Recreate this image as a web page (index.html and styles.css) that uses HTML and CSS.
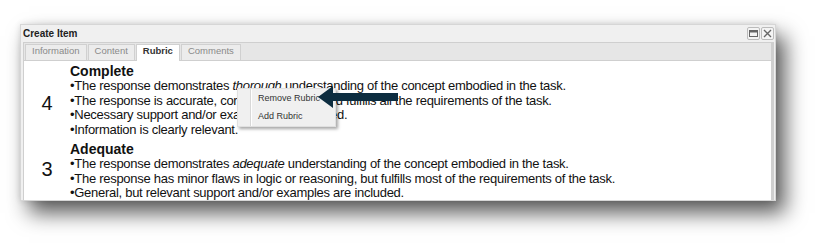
FILE: index.html
```html
<!DOCTYPE html>
<html>
<head>
<meta charset="utf-8">
<link rel="stylesheet" href="styles.css">
</head>
<body>
<div class="window">
  <div class="titlebar">
    <span class="title">Create Item</span>
    <div class="tools">
      <span class="tool"><svg width="9" height="9" viewBox="0 0 9 9"><rect x="0.5" y="1.5" width="8" height="6" fill="none" stroke="#666" stroke-width="1"/><rect x="0.5" y="1.5" width="8" height="2" fill="#666"/></svg></span>
      <span class="tool"><svg width="9" height="9" viewBox="0 0 9 9"><path d="M1 1 L8 8 M8 1 L1 8" stroke="#666" stroke-width="1.4"/></svg></span>
    </div>
  </div>
  <div class="panel">
    <div class="tabs">
      <span class="tab">Information</span>
      <span class="tab">Content</span>
      <span class="tab active">Rubric</span>
      <span class="tab">Comments</span>
    </div>
    <div class="content">
      <div class="rubric">
        <div class="score">4</div>
        <div class="desc">
          <div class="head">Complete</div>
          <div class="line">•The response demonstrates <i>thorough</i> understanding of the concept embodied in the task.</div>
          <div class="line">•The response is accurate, correct, complete, and fulfills all the requirements of the task.</div>
          <div class="line">•Necessary support and/or examples are included.</div>
          <div class="line">•Information is clearly relevant.</div>
        </div>
      </div>
      <div class="rubric">
        <div class="score top">3</div>
        <div class="desc">
          <div class="head">Adequate</div>
          <div class="line">•The response demonstrates <i>adequate</i> understanding of the concept embodied in the task.</div>
          <div class="line">•The response has minor flaws in logic or reasoning, but fulfills most of the requirements of the task.</div>
          <div class="line">•General, but relevant support and/or examples are included.</div>
        </div>
      </div>
    </div>
  </div>
</div>
<div class="menu">
  <div class="item">Remove Rubric</div>
  <div class="item">Add Rubric</div>
</div>
<svg class="arrow" width="80" height="22" viewBox="0 0 80 22"><polygon points="0,11 15,0 15,7 80,7 80,15 15,15 15,22" fill="#0d2d40"/></svg>
</body>
</html>
```
FILE: styles.css
```css
html, body { margin: 0; padding: 0; background: #fff; }
body { width: 823px; height: 247px; overflow: hidden; position: relative; font-family: "Liberation Sans", sans-serif; }
.window {
  margin: 24px 0 0 20px;
  width: 754px;
  height: 175px;
  background: #f0f0f0;
  border: 1px solid #d6d6d6;
  box-shadow: 9px 12px 20px rgba(0,0,0,0.65), 0 0 6px rgba(0,0,0,0.12);
  overflow: hidden;
}
.titlebar { height: 17px; display: flex; justify-content: space-between; align-items: center; padding: 0 1px 0 2px; }
.title { font: bold 10px "Liberation Sans", sans-serif; color: #222; }
.tools { display: flex; gap: 1px; }
.tool { width: 11px; height: 11px; border: 1px solid #bbb; border-radius: 2px; background: #f4f4f4; display: flex; align-items: center; justify-content: center; }
.panel { margin: 0 1px 0 2px; border: 1px solid #cfcfcf; border-right-width: 3px; background: #fff; height: 200px; }
.tabs { height: 17px; background: #e6e6e6; display: flex; gap: 1px; padding-left: 1px; border-bottom: 1px solid #cfcfcf; align-items: flex-end; }
.tab { height: 15px; line-height: 15px; padding: 0 6px; border: 1px solid #d0d0d0; border-bottom: none; background: #ececec; color: #8a8a8a; font: 9.5px "Liberation Sans", sans-serif; }
.tab.active { background: #fff; color: #333; font-weight: bold; height: 16px; margin-bottom: -1px; }
.content { padding-top: 3px; }
.rubric { display: flex; margin-bottom: 5px; }
.score { width: 46px; flex: none; display: flex; align-items: center; justify-content: center; font: 20px "Liberation Sans", sans-serif; color: #111; padding-top: 6px; }
.score.top { align-items: flex-start; padding-top: 16px; }
.desc { font-family: "Liberation Sans", sans-serif; color: #111; }
.head { font-weight: bold; font-size: 14px; line-height: 15px; }
.line { font-size: 13px; line-height: 14.5px; letter-spacing: -0.28px; }
.menu {
  position: absolute; left: 237px; top: 88px; width: 99px; height: 39px;
  background: #f0f0f0; box-shadow: 2px 2px 3px rgba(0,0,0,0.35); border: 1px solid #e0e0e0; box-sizing: border-box;
  padding-left: 20px; font: 9px "Liberation Sans", sans-serif; color: #333;
  background-image: linear-gradient(to right, transparent 12px, #d8d8d8 12px, #d8d8d8 13px, #fff 13px, #fff 14px, transparent 14px);
}
.item { height: 18px; line-height: 18px; }
.arrow { position: absolute; left: 318px; top: 86px; }
```
